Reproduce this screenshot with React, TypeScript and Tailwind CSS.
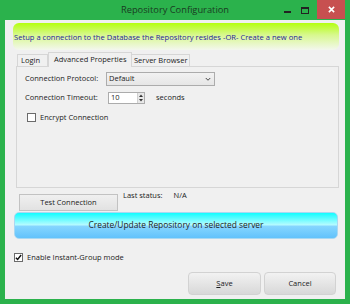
import React from "react";

const font = "font-['Open_Sans',sans-serif]";

const Check: React.FC<{ checked?: boolean }> = ({ checked }) => (
  <span className="flex h-[9px] w-[9px] items-center justify-center border border-[#6b6b6b] bg-white">
    {checked && (
      <svg viewBox="0 0 8 8" className="h-[7px] w-[7px]">
        <path d="M1 4.2 L3 6.3 L7 1.2" fill="none" stroke="#111" strokeWidth="1.6" />
      </svg>
    )}
  </span>
);

const App: React.FC = () => {
  return (
    <div className={`${font} flex h-[304px] w-[350px] flex-col whitespace-nowrap bg-[#2bb24c] px-[5px] pb-[5px] text-[7.5px] text-[#1b1b1b]`}>
      {/* Title bar */}
      <div className="grid h-[20px] grid-cols-[1fr_auto_1fr] items-start">
        <div />
        <div className="pt-[3px] text-[9.3px] leading-[14px] text-[#1a3a22]">Repository Configuration</div>
        <div className="flex h-[20px] justify-end">
          <div className="flex h-[20px] w-[18px] items-center justify-center">
            <span className="mt-[4px] h-[2px] w-[7px] bg-[#222]" />
          </div>
          <div className="flex h-[20px] w-[18px] items-center justify-center">
            <span className="h-[7px] w-[8px] border border-t-2 border-[#222]" />
          </div>
          <div className="ml-[3px] flex h-[19px] w-[28px] items-center justify-center bg-[#c75050]">
            <svg viewBox="0 0 8 8" className="h-[7px] w-[7px]">
              <path d="M1 1 L7 7 M7 1 L1 7" stroke="#fff" strokeWidth="1.8" />
            </svg>
          </div>
        </div>
      </div>

      {/* Content */}
      <div className="flex flex-1 flex-col bg-[#f0f0f0]">
        <div className="ml-[8px] mt-[3px] flex h-[27px] w-[326px] items-center rounded-[6px] bg-[linear-gradient(to_bottom,#b4ff10_0%,#d8f890_45%,#f3f7ee_100%)] pl-[1px] pt-[2px] text-[7.6px] text-[#25239a]">
          Setup a connection to the Database the Repository resides -OR- Create a new one
        </div>

        {/* Tabs */}
        <div className="ml-[11px] mt-[2px] flex w-[323px] flex-col">
          <div className="flex h-[14px] items-end pl-[1px]">
            <div className="flex h-[12px] w-[31px] items-center border border-b-0 border-[#d6d6d6] bg-[#f0f0f0] pl-[3px]">Login</div>
            <div className="relative z-10 -mb-px flex h-[15px] w-[84px] items-center border border-b-0 border-[#d6d6d6] bg-[#f0f0f0] pl-[5px]">
              Advanced Properties
            </div>
            <div className="flex h-[12px] w-[58px] items-center border border-b-0 border-l-0 border-[#d6d6d6] bg-[#f0f0f0] pl-[2px]">Server Browser</div>
          </div>
          <div className="flex h-[122px] flex-col border border-[#d6d6d6] pl-[8px] pt-[5px]">
            <div className="flex h-[14px] items-center">
              <span className="w-[81px]">Connection Protocol:</span>
              <div className="flex h-[14px] w-[109px] items-center justify-between border border-[#acacac] bg-[linear-gradient(to_bottom,#f2f2f2,#e6e6e6)] px-[2px]">
                <span>Default</span>
                <svg viewBox="0 0 8 6" className="mr-[1px] h-[5px] w-[6px]">
                  <path d="M1 1 L4 4 L7 1" fill="none" stroke="#444" strokeWidth="1.3" />
                </svg>
              </div>
            </div>
            <div className="mt-[6px] flex h-[12px] items-center">
              <span className="w-[83px]">Connection Timeout:</span>
              <div className="flex h-[12px] w-[37px] items-center border border-[#acacac] bg-white">
                <span className="flex-1 pl-[2px]">10</span>
                <div className="flex h-full w-[7px] flex-col border-l border-[#d0d0d0] bg-[#e8e8e8]">
                  <svg viewBox="0 0 6 5" className="h-[5px] w-[6px]">
                    <path d="M1 4 L3 1.5 L5 4 Z" fill="#333" />
                  </svg>
                  <svg viewBox="0 0 6 5" className="h-[5px] w-[6px]">
                    <path d="M1 1 L3 3.5 L5 1 Z" fill="#333" />
                  </svg>
                </div>
              </div>
              <span className="ml-[11px]">seconds</span>
            </div>
            <div className="ml-[2px] mt-[8px] flex items-center gap-[4px]">
              <Check />
              <span>Encrypt Connection</span>
            </div>
          </div>
        </div>

        {/* Test connection row */}
        <div className="ml-[14px] mt-[1px] flex items-start">
          <button className="mt-[5px] flex h-[17px] w-[99px] items-center justify-center border border-[#c2c2c2] bg-[linear-gradient(to_bottom,#f0f0f0,#e2e2e2)]">
            Test Connection
          </button>
          <span className="ml-[5px] leading-[12px]">Last status:</span>
          <span className="ml-[11px] leading-[12px]">N/A</span>
        </div>

        <button className="ml-[9px] mt-[1px] flex h-[27px] w-[324px] items-center justify-center rounded-[5px] border border-[#a9d8f2] bg-[linear-gradient(to_bottom,#12fdff_0%,#b8fbff_48%,#86d6ff_52%,#62c2fb_100%)] text-[8.4px] text-[#222]">
          Create/Update Repository on selected server
        </button>

        <div className="ml-[9px] mt-[13px] flex items-center gap-[4px]">
          <Check checked />
          <span>Enable Instant-Group mode</span>
        </div>

        <div className="mr-[9px] mt-[9px] flex justify-end gap-[3px]">
          <button className="flex h-[23px] w-[73px] items-center justify-center rounded-[4px] border border-[#d2d2d2] bg-[linear-gradient(to_bottom,#f2f2f2,#d8d8d8)]">
            <span><span className="underline">S</span>ave</span>
          </button>
          <button className="flex h-[23px] w-[72px] items-center justify-center rounded-[4px] border border-[#d2d2d2] bg-[linear-gradient(to_bottom,#f2f2f2,#d8d8d8)]">
            Cancel
          </button>
        </div>
      </div>
    </div>
  );
};

export default App;
